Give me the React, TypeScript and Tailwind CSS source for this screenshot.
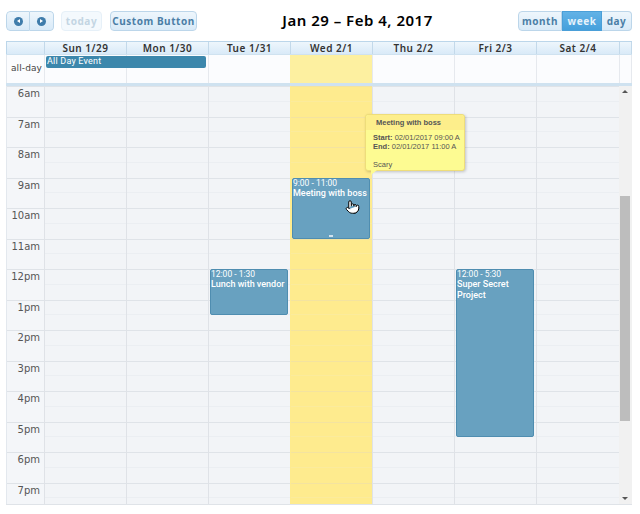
import { Pointer } from "lucide-react"

const days = [
  { label: "Sun 1/29", width: "w-[82px]" },
  { label: "Mon 1/30", width: "w-[82px]" },
  { label: "Tue 1/31", width: "w-[82px]" },
  { label: "Wed 2/1", width: "w-[82px]", today: true },
  { label: "Thu 2/2", width: "w-[82px]" },
  { label: "Fri 2/3", width: "w-[82px]" },
  { label: "Sat 2/4", width: "w-[83px]" },
]

const hours = ["6am", "7am", "8am", "9am", "10am", "11am", "12pm", "1pm", "2pm", "3pm", "4pm", "5pm", "6pm", "7pm"]

const btnText = "font-['Noto_Sans',sans-serif] text-[10px] font-bold tracking-[0.55px] whitespace-nowrap"
const btn = `h-5 flex items-center justify-center border border-[#bcd6ea] bg-gradient-to-b from-[#eef6fc] to-[#d9eaf8] text-[#4b7ea6] ${btnText}`

const Slots = ({ today }: { today?: boolean }) => (
  <>
    {hours.map((h) => (
      <div key={h} className={`h-[30.5px] flex flex-col border-t ${today ? "border-[#f3e3a0]" : "border-[#dfe3e8]"}`}>
        <div className={`h-[14.5px] border-b ${today ? "border-[#fbeb9c]" : "border-[#ebeef2]"}`} />
      </div>
    ))}
  </>
)

const CalEvent = ({ time, title, className }: { time: string; title: string; className: string }) => (
  <div
    className={`absolute left-[1px] w-[78px] rounded-[2px] border border-[#4f8db0] bg-[#68a1c0] text-white font-['Roboto',sans-serif] ${className}`}
  >
    <div className="text-[8.5px] leading-[9px]">{time}</div>
    <div className="text-[9px] font-medium leading-[11px]">{title}</div>
  </div>
)

const App = () => {
  return (
    <div className="w-[640px] h-[514px] overflow-hidden bg-white font-['DejaVu_Sans',sans-serif]">
      {/* Toolbar */}
      <div className="h-[41px] pt-[11px] pl-[6px] pr-[8px] flex justify-between items-start">
        <div className="flex">
          <div className="flex rounded-[4px] overflow-hidden">
            <button className={`${btn} w-[24px] rounded-l-[4px]`}>
              <span className="w-[9px] h-[9px] rounded-full bg-[#3f7cab] flex items-center justify-center">
                <span className="border-y-[2.5px] border-r-[3px] border-y-transparent border-r-white" />
              </span>
            </button>
            <button className={`${btn} w-[24px] border-l-0 rounded-r-[4px]`}>
              <span className="w-[9px] h-[9px] rounded-full bg-[#3f7cab] flex items-center justify-center">
                <span className="border-y-[2.5px] border-l-[3px] border-y-transparent border-l-white" />
              </span>
            </button>
          </div>
          <button className={`ml-[7px] w-[41px] h-5 rounded-[4px] border border-[#e6f0f8] bg-[#f4f9fd] text-[#c3d5e3] ${btnText}`}>
            today
          </button>
          <button className={`${btn} ml-[8px] w-[87px] rounded-[4px]`}>Custom Button</button>
        </div>
        <div className="font-['Noto_Sans',sans-serif] text-[15px] leading-[18px] font-semibold text-black tracking-[0.5px]">
          Jan 29 – Feb 4, 2017
        </div>
        <div className="flex">
          <button className={`${btn} w-[44px] rounded-l-[4px]`}>month</button>
          <button className={`h-5 w-[40px] border border-[#4a9fd8] bg-gradient-to-b from-[#62b2e6] to-[#45a0dc] text-[#e6f3fb] ${btnText}`}>
            week
          </button>
          <button className={`${btn} w-[30px] border-l-0 rounded-r-[4px]`}>day</button>
        </div>
      </div>

      <div className="relative ml-[6px] w-[626px] h-[464px] border-b border-[#dfe3e8] text-[#444]">
        {/* Day headers */}
        <div className="flex h-[13px] border-t border-[#bcd6ea] bg-gradient-to-b from-[#eef6fc] to-[#d9eaf8]">
          <div className="w-[38px] border-l border-[#bcd6ea]" />
          {days.map((d) => (
            <div
              key={d.label}
              className={`${d.width} border-l border-[#c3d9ea] text-center font-['Noto_Sans',sans-serif] text-[10px] leading-[12px] font-semibold tracking-[0.5px] text-[#333]`}
            >
              {d.label}
            </div>
          ))}
          <div className="flex-1 border-x border-[#c3d9ea]" />
        </div>

        {/* All-day row */}
        <div className="relative flex h-[29px] border-t border-[#cfe2f0] bg-[#fbfcfe]">
          <div className="w-[38px] border-l border-[#e3e8ee] pt-[7px] pr-[2px] text-right text-[9px] leading-[12px] tracking-[0.1px] text-[#444]">
            all-day
          </div>
          {days.map((d) => (
            <div
              key={d.label}
              className={`${d.width} border-l ${d.today ? "border-[#fdf0a0] bg-[#fdf0a0]" : "border-[#e6e9ee]"}`}
            />
          ))}
          <div className="flex-1 border-x border-[#e6e9ee]" />
          <div className="absolute left-[40px] top-[1px] h-[12px] w-[160px] rounded-[2px] bg-[#3c87ac] px-[1px] font-['Roboto',sans-serif] text-[9px] leading-[10px] tracking-[0.2px] text-white">
            All Day Event
          </div>
        </div>

        {/* Divider */}
        <div className="h-[3px] bg-[#cfe2f0]" />

        {/* Time grid */}
        <div className="relative flex h-[418px] overflow-hidden bg-[#f2f4f7]">
          <div className="w-[38px] shrink-0 border-l border-[#e3e8ee] bg-[#f4f6f9]">
            {hours.map((h) => (
              <div
                key={h}
                className="h-[30.5px] border-t border-[#dfe3e8] pt-[1px] pr-[4px] text-right text-[10px] leading-[12px] text-[#555]"
              >
                {h}
              </div>
            ))}
          </div>
          {days.map((d, i) => (
            <div
              key={d.label}
              className={`relative ${d.width} shrink-0 border-l ${d.today ? "border-[#feeb8e] bg-[#feeb8e]" : "border-[#dfe2e7]"}`}
            >
              <Slots today={d.today} />
              {i === 2 && <CalEvent time="12:00 - 1:30" title="Lunch with vendor" className="top-[183px] h-[46px]" />}
              {i === 3 && (
                <CalEvent time="9:00 - 11:00" title="Meeting with boss" className="top-[92px] h-[61px]" />
              )}
              {i === 5 && (
                <CalEvent time="12:00 - 5:30" title="Super Secret Project" className="top-[183px] h-[168px]" />
              )}
            </div>
          ))}

          {/* Scrollbar */}
          <div className="relative flex-1 bg-[#f1f1f1]">
            <div className="absolute left-[3px] top-[4px] border-x-[3px] border-b-[3px] border-x-transparent border-b-[#555]" />
            <div className="absolute left-[1px] top-[110px] h-[225px] w-[10px] bg-[#bdbdbd]" />
            <div className="absolute left-[3px] bottom-[4px] border-x-[3px] border-t-[3px] border-x-transparent border-t-[#555]" />
          </div>

          {/* Resize handle and cursor */}
          <div className="absolute left-[323px] top-[149px] h-[2px] w-[4px] bg-[#cfe2f0]" />
          <Pointer className="absolute left-[339px] top-[113px] h-[16px] w-[15px] fill-white text-black" strokeWidth={1.6} />

          {/* Tooltip */}
          <div className="absolute left-[359px] top-[28px] h-[57px] w-[100px] rounded-[3px] border border-[#eedd7a] bg-[#fdfb92] font-['Liberation_Sans',sans-serif] text-[7.5px] leading-[9px] text-[#555] shadow-[1px_1px_3px_rgba(0,0,0,0.2)]">
            <div className="h-[15px] rounded-t-[3px] bg-[#fdee8b] pl-[10px] pt-[3px] font-bold text-[#555]">Meeting with boss</div>
            <div className="pl-[7px] pt-[3px]">
              <div>
                <b>Start:</b> 02/01/2017 09:00 A
              </div>
              <div>
                <b>End:</b> 02/01/2017 11:00 A
              </div>
              <div className="mt-[9px]">Scary</div>
            </div>
            <div className="absolute left-[5px] top-[55px] border-r-[6px] border-t-[5px] border-r-transparent border-t-[#fdfb92]" />
          </div>
        </div>
      </div>
    </div>
  )
}

export default App
